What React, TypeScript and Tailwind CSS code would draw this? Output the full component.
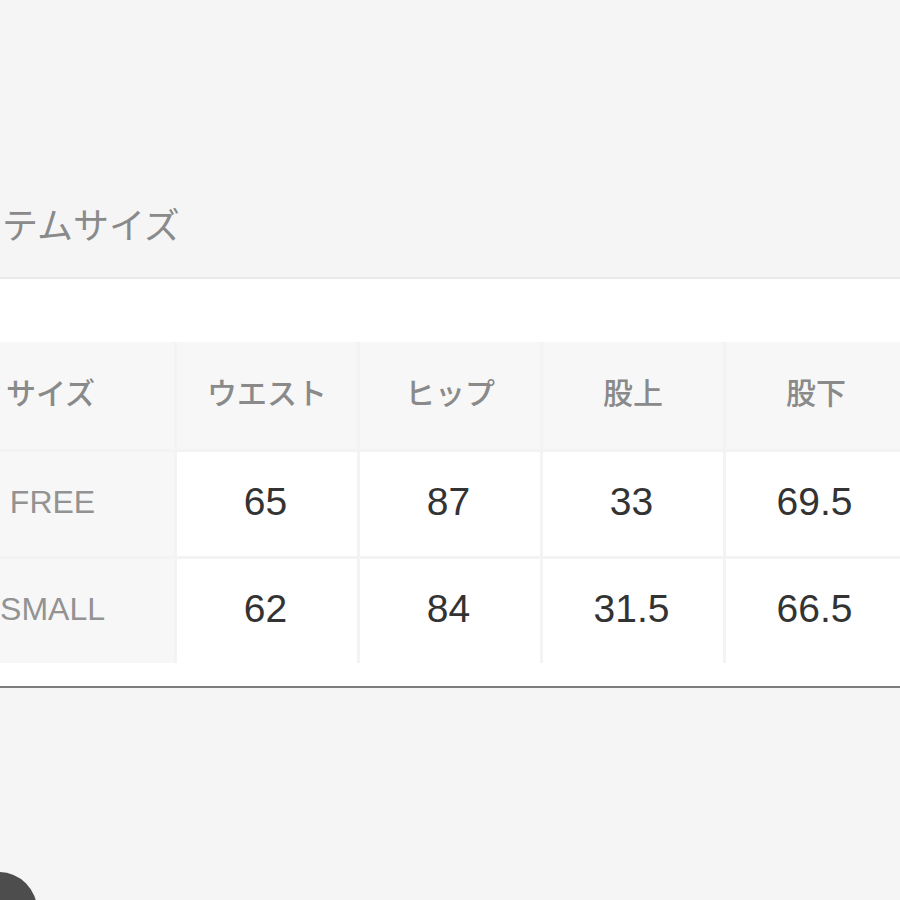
import React from "react";

const headers = ["サイズ", "ウエスト", "ヒップ", "股上", "股下"];
const rows = [
  ["FREE", "65", "87", "33", "69.5"],
  ["SMALL", "62", "84", "31.5", "66.5"],
];

export default function App() {
  return (
    <div
      className="relative w-[900px] h-[900px] overflow-hidden bg-[#f5f5f5]"
      style={{ fontFamily: '"Liberation Sans", "Noto Sans CJK JP", sans-serif' }}
    >
      <div className="h-[279px] border-b-2 border-[#e9e9e9] pt-[205px] pl-[2px]">
        <div className="text-[36px] leading-[44px] text-[#8a8a8a] whitespace-nowrap">テムサイズ</div>
      </div>
      <div className="bg-white pt-[63px] pb-[23px] border-b-2 border-[#7d7d7d]">
        <div className="ml-[-73px] grid grid-cols-[247px_180px_180px_180px_180px] gap-[3px] bg-[#f3f3f3] w-[979px]">
          {headers.map((h) => (
            <div
              key={h}
              className="h-[107px] bg-[#f7f7f7] flex items-center justify-center text-[30px] font-medium text-[#8a8a8a] pb-[4px]"
            >
              {h}
            </div>
          ))}
          {rows.map((r) =>
            r.map((c, i) => (
              <div
                key={r[0] + i}
                className={
                  i === 0
                    ? "h-[104px] bg-[#f7f7f7] flex items-center justify-center text-[32px] text-[#939393] pb-[4px] pl-[4px]"
                    : "h-[104px] bg-white flex items-center justify-center text-[39px] text-[#333333] pb-[4px] pr-[3px]"
                }
              >
                {c}
              </div>
            ))
          )}
        </div>
      </div>
      <div className="absolute left-[-39px] top-[872px] w-[76px] h-[76px] rounded-full bg-[#4d4d4d]" />
    </div>
  );
}
